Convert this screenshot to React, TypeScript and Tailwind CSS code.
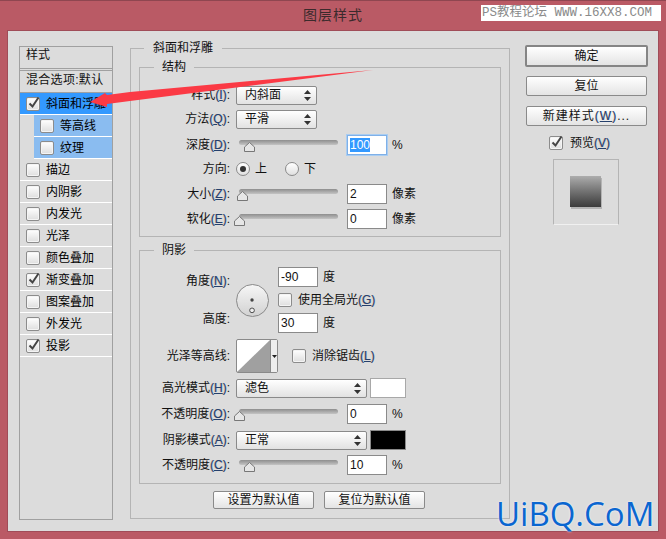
import type { ReactNode } from "react";

const FONT = "font-['Liberation_Sans','Noto_Sans_CJK_SC',sans-serif]";

function Key({ k }: { k: string }) {
  return (
    <span className="text-[#26406c] [text-shadow:-0.4px_0_rgba(201,138,58,0.45),0.4px_0_rgba(58,127,208,0.45)]">
      (<span className="underline">{k}</span>)
    </span>
  );
}

function Check({ on = false, className = "" }: { on?: boolean; className?: string }) {
  return (
    <span className={`relative block h-[14px] w-[14px] shrink-0 rounded-[2px] border border-[#8c8c8c] bg-gradient-to-b from-[#ffffff] to-[#dedede] shadow-[inset_0_0_0_1px_#f4f4f4] ${className}`}>
      {on && (
        <svg viewBox="0 0 14 14" className="absolute left-0 top-[-2px] h-[14px] w-[14px]">
          <path d="M2.5 7.5 L5.5 10.5 L11.5 1.5" fill="none" stroke="#444" strokeWidth="2" />
        </svg>
      )}
    </span>
  );
}

function Row({ on, label, child, active }: { on?: boolean; label: string; child?: boolean; active?: boolean }) {
  return (
    <div className={`flex h-[22px] border-b border-white ${child ? "ml-[14px] bg-[#8abcf0] pl-[6px]" : "pl-[6px]"} ${active ? "bg-[#3399ff]" : ""} items-center gap-[6px] text-black`}>
      <Check on={on} />
      <span>{label}</span>
    </div>
  );
}

function Select({ text, wide }: { text: string; wide?: boolean }) {
  return (
    <div className={`flex h-[19px] items-center justify-between rounded-[2px] border border-[#8a8a8a] bg-gradient-to-b from-[#ffffff] to-[#e2e2e2] pl-[8px] pr-[5px] ${wide ? "w-[131px]" : "w-[81px]"}`}>
      <span>{text}</span>
      <svg viewBox="0 0 7 11" className="h-[11px] w-[7px]">
        <path d="M3.5 0 L7 4 H0 Z M3.5 11 L0 7 H7 Z" fill="#333" />
      </svg>
    </div>
  );
}

function NumBox({ value, focus }: { value: string; focus?: boolean }) {
  return (
    <div className={`flex h-[20px] w-[40px] items-center bg-white pl-[2px] border ${focus ? "border-[#7fb0e8] shadow-[0_0_0_1px_#a9cdf2]" : "border-[#8a8a8a]"}`}>
      <span className={focus ? "bg-[#3399ff] text-white leading-[14px]" : ""}>{value}</span>
    </div>
  );
}

function Slider({ at }: { at: number }) {
  return (
    <div className="relative ml-[3px] mr-[9px] mt-[-5px] h-[5px] w-[99px] rounded-full bg-gradient-to-b from-[#8e8e8e] to-[#c4c4c4]">
      <svg viewBox="0 0 11 10" className="absolute top-[2px] h-[10px] w-[11px]" style={{ left: at }}>
        <path d="M5.5 0.5 L10.5 5 V9.5 H0.5 V5 Z" fill="#e6e6e6" stroke="#777" />
      </svg>
    </div>
  );
}

function FormRow({ label, children, className = "" }: { label: ReactNode; children: ReactNode; className?: string }) {
  return (
    <div className={`flex h-[20px] items-center ${className}`}>
      <div className="mr-[6px] w-[90px] whitespace-nowrap text-right">{label}</div>
      {children}
    </div>
  );
}

function Btn({ children, className = "" }: { children: ReactNode; className?: string }) {
  return (
    <div className={`flex items-center justify-center rounded-[2px] border border-[#8a8a8a] bg-gradient-to-b from-[#ffffff] to-[#e4e4e4] ${className}`}>
      {children}
    </div>
  );
}

export default function App() {
  return (
    <div className={`relative h-[539px] w-[666px] overflow-hidden bg-[#ba5a65] text-[12px] leading-[16px] text-[#111] ${FONT}`}>
      {/* TITULO */}
      <div className="flex h-[31px] items-center justify-center border-t border-[#8f4650] pb-[2px] text-[14px] tracking-[1px] text-[#3b2a2c]">
        图层样式
      </div>

      {/* DIALOGO */}
      <div className="mx-[8px] flex h-[500px] w-[650px] bg-[#dcdcdc] pl-[11px] shadow-[0_0_0_1px_#a04c58]">
        {/* LISTA */}
        <div className="mt-[15px] h-[474px] w-[94px] border border-[#a0a0a0]">
          <div className="h-[22px] border-b border-[#a0a0a0] pl-[6px]">样式</div>
          <div className="mt-[1px] h-[23px] border-y border-[#a0a0a0] pl-[6px] pt-[1px] tracking-[0.3px]">混合选项:默认</div>
          <Row on active label="斜面和浮雕" />
          <Row child label="等高线" />
          <Row child label="纹理" />
          <Row label="描边" />
          <Row label="内阴影" />
          <Row label="内发光" />
          <Row label="光泽" />
          <Row label="颜色叠加" />
          <Row on label="渐变叠加" />
          <Row label="图案叠加" />
          <Row label="外发光" />
          <Row on label="投影" />
        </div>

        {/* PANEL CENTRAL */}
        <div className="ml-[17px] mt-[9px] w-[380px]">
          <fieldset className="h-[479px] border border-[#b4b4b4] px-[8px]">
            <legend className="ml-[5px] px-[9px]">斜面和浮雕</legend>

            <fieldset className="mt-[3px] h-[178px] border border-[#b4b4b4] pt-[10px]">
              <legend className="ml-[14px] px-[8px]">结构</legend>
              <FormRow label={<>样式<Key k="I" />:</>}><Select text="内斜面" /></FormRow>
              <FormRow className="mt-[4px]" label={<>方法<Key k="Q" />:</>}><Select text="平滑" /></FormRow>
              <FormRow className="mt-[6px]" label={<>深度<Key k="D" />:</>}>
                <Slider at={5} />
                <NumBox value="100" focus />
                <span className="ml-[5px]">%</span>
              </FormRow>
              <FormRow className="mt-[4px]" label="方向:">
                <span className="flex h-[14px] w-[14px] items-center justify-center rounded-full border border-[#8a8a8a] bg-gradient-to-b from-white to-[#e0e0e0]">
                  <span className="h-[6px] w-[6px] rounded-full bg-[#333]" />
                </span>
                <span className="ml-[5px]">上</span>
                <span className="ml-[18px] h-[14px] w-[14px] rounded-full border border-[#8a8a8a] bg-gradient-to-b from-white to-[#e0e0e0]" />
                <span className="ml-[5px]">下</span>
              </FormRow>
              <FormRow className="mt-[5px]" label={<>大小<Key k="Z" />:</>}>
                <Slider at={-2} />
                <NumBox value="2" />
                <span className="ml-[5px]">像素</span>
              </FormRow>
              <FormRow className="mt-[5px]" label={<>软化<Key k="E" />:</>}>
                <Slider at={-5} />
                <NumBox value="0" />
                <span className="ml-[5px]">像素</span>
              </FormRow>
            </fieldset>

            <fieldset className="mt-[5px] h-[242px] border border-[#b4b4b4] pt-[9px]">
              <legend className="ml-[14px] px-[8px]">阴影</legend>
              <div className="flex h-[66px]">
                <div className="mr-[6px] w-[90px] pt-[6px] text-right">
                  <div>角度<Key k="N" />:</div>
                  <div className="mt-[22px]">高度:</div>
                </div>
                <div className="mt-[17px] flex h-[33px] w-[33px] items-center justify-center rounded-full border border-[#8a8a8a] bg-gradient-to-b from-[#f6f6f6] to-[#d2d2d2]">
                  <svg viewBox="0 0 33 33" className="h-[33px] w-[33px]">
                    <circle cx="16" cy="16" r="1.8" fill="#444" />
                    <circle cx="16" cy="27" r="2.5" fill="#eee" stroke="#444" />
                  </svg>
                </div>
                <div className="ml-[9px]">
                  <div className="flex items-center">
                    <NumBox value="-90" />
                    <span className="ml-[5px]">度</span>
                  </div>
                  <div className="mt-[6px] flex h-[14px] items-center gap-[6px] whitespace-nowrap">
                    <Check />
                    <span>使用全局光<Key k="G" /></span>
                  </div>
                  <div className="mt-[6px] flex items-center">
                    <NumBox value="30" />
                    <span className="ml-[5px]">度</span>
                  </div>
                </div>
              </div>

              <div className="mt-[6px] flex h-[34px] items-center">
                <div className="mr-[6px] w-[90px] whitespace-nowrap text-right">光泽等高线:</div>
                <div className="flex h-[34px] w-[42px] rounded-[2px] border border-[#8a8a8a] bg-white">
                  <svg viewBox="0 0 33 32" className="h-[32px] w-[33px]">
                    <path d="M0 32 L33 0 V32 Z" fill="#a0a0a0" />
                  </svg>
                  <div className="flex flex-1 items-center justify-center border-l border-[#8a8a8a] bg-[#eeeeee]">
                    <svg viewBox="0 0 5 3" className="h-[3px] w-[5px]"><path d="M0 0 H5 L2.5 3 Z" fill="#222" /></svg>
                  </div>
                </div>
                <Check className="ml-[14px]" />
                <span className="ml-[6px]">消除锯齿<Key k="L" /></span>
              </div>

              <FormRow className="mt-[5px]" label={<>高光模式<Key k="H" />:</>}>
                <Select text="滤色" wide />
                <div className="ml-[3px] h-[20px] w-[36px] border border-[#a8a8a8] bg-white" />
              </FormRow>
              <FormRow className="mt-[6px]" label={<>不透明度<Key k="O" />:</>}>
                <Slider at={-5} />
                <NumBox value="0" />
                <span className="ml-[5px]">%</span>
              </FormRow>
              <FormRow className="mt-[6px]" label={<>阴影模式<Key k="A" />:</>}>
                <Select text="正常" wide />
                <div className="ml-[3px] h-[20px] w-[36px] border border-[#8a8a8a] bg-black" />
              </FormRow>
              <FormRow className="mt-[5px]" label={<>不透明度<Key k="C" />:</>}>
                <Slider at={5} />
                <NumBox value="10" />
                <span className="ml-[5px]">%</span>
              </FormRow>
            </fieldset>

            <div className="mt-[7px] flex gap-[10px] pl-[74px]">
              <Btn className="h-[18px] w-[101px]">设置为默认值</Btn>
              <Btn className="h-[18px] w-[101px]">复位为默认值</Btn>
            </div>
          </fieldset>
        </div>

        {/* COLUMNA DERECHA */}
        <div className="ml-[15px] mt-[14px] w-[123px]">
          <Btn className="h-[22px] w-[123px] border-2 border-[#858585]">确定</Btn>
          <Btn className="ml-[1px] mt-[9px] h-[20px] w-[121px]">复位</Btn>
          <Btn className="ml-[1px] mt-[10px] h-[20px] w-[121px]">
            <span className="tracking-[1px]">新建样式<Key k="W" />...</span>
          </Btn>
          <div className="ml-[24px] mt-[10px] flex h-[14px] items-center gap-[7px]">
            <Check on />
            <span>预览<Key k="V" /></span>
          </div>
          <div className="ml-[28px] mt-[9px] flex h-[66px] w-[66px] items-center justify-center border border-[#b4b4b4] border-b-[#f0f0f0] pb-[1px] pr-[1px]">
            <div className="h-[31px] w-[31px] bg-gradient-to-b from-[#adadad] to-[#3c3c3c] shadow-[1px_2px_0_#b4b4b4]" />
          </div>
        </div>
      </div>

      {/* MARCAS SOBRE LA IMAGEN */}
      <svg viewBox="0 0 666 539" className="pointer-events-none absolute left-0 top-0 h-[539px] w-[666px]">
        <path d="M373 70 L130 92 L107 95 L105 93 L90 102 L107 107 L107 104 L130 101 Z" fill="#fb3a45" />
      </svg>
      <div className="absolute left-[481px] top-[5px] flex h-[16px] w-[180px] items-center whitespace-nowrap bg-white pl-[1px] font-['Liberation_Mono','Noto_Sans_CJK_SC',monospace] text-[12.5px] text-[#8a8a8a]">
        PS教程论坛 WWW.16XX8.COM
      </div>
      <div className="absolute left-[496px] top-[492px] whitespace-nowrap font-['Open_Sans',sans-serif] text-[33px] leading-[44px] text-[#0b66d0] [text-shadow:0_0_2px_#ffffff]">
        UiBQ.CoM
      </div>
    </div>
  );
}
